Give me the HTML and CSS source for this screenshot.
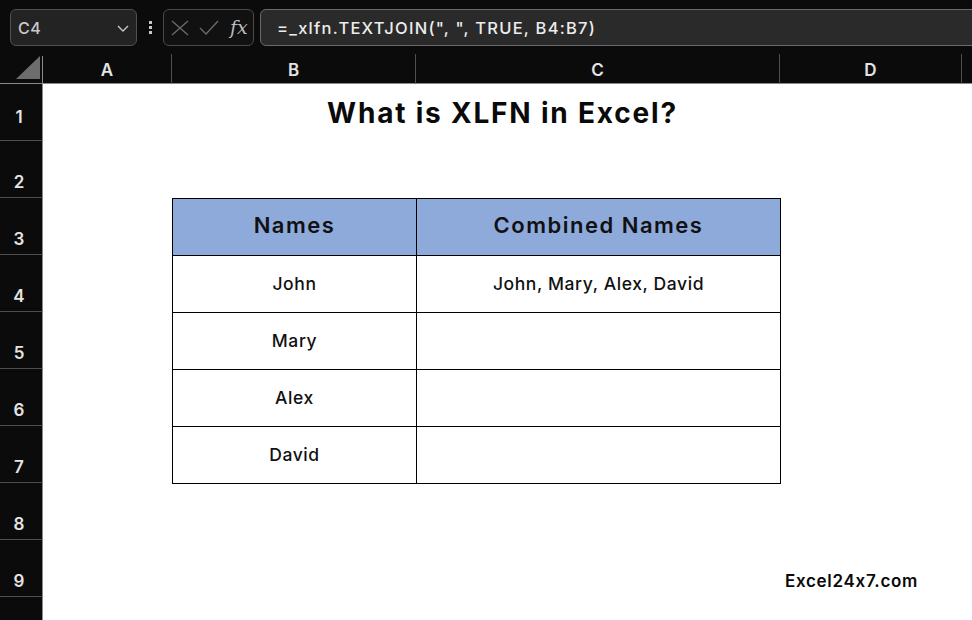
FILE: index.html
```html
<!DOCTYPE html>
<html>
<head>
<meta charset="utf-8">
<link rel="stylesheet" href="styles.css">
</head>
<body>
<div class="app">
  <div class="topbar">
    <div class="namebox">
      <span class="ref">C4</span>
      <svg class="chev" width="12" height="7" viewBox="0 0 12 7"><path d="M1 1 L6 6 L11 1" fill="none" stroke="#c8c8c8" stroke-width="1.4"/></svg>
    </div>
    <div class="dots"><i></i><i></i><i></i></div>
    <div class="fxbox">
      <svg width="18" height="16" viewBox="0 0 18 16"><path d="M1 1 L17 15 M17 1 L1 15" stroke="#6a6a6a" stroke-width="1.4" fill="none"/></svg>
      <svg width="20" height="16" viewBox="0 0 20 16"><path d="M1 8 L7 14 L19 1" stroke="#6a6a6a" stroke-width="1.4" fill="none"/></svg>
      <span class="fx">fx</span>
    </div>
    <div class="formula">=_xlfn.TEXTJOIN(", ", TRUE, B4:B7)</div>
  </div>
  <div class="sheet">
    <div class="corner"><div class="tri"></div></div>
    <div class="colh">A</div>
    <div class="colh">B</div>
    <div class="colh">C</div>
    <div class="colh">D</div>
    <div class="colh last"></div>

    <div class="rowh r1">1</div>
    <div class="title">What is XLFN in Excel?</div>
    <div class="rowh">2</div>
    <div class="blank"></div>
    <div class="rowh">3</div>
    <div class="blank sA"></div>
    <div class="cell head">Names</div>
    <div class="cell head">Combined Names</div>
    <div class="blank sD"></div>
    <div class="rowh">4</div>
    <div class="blank sA"></div>
    <div class="cell">John</div>
    <div class="cell">John, Mary, Alex, David</div>
    <div class="blank sD"></div>
    <div class="rowh">5</div>
    <div class="blank sA"></div>
    <div class="cell">Mary</div>
    <div class="cell"></div>
    <div class="blank sD"></div>
    <div class="rowh">6</div>
    <div class="blank sA"></div>
    <div class="cell">Alex</div>
    <div class="cell"></div>
    <div class="blank sD"></div>
    <div class="rowh">7</div>
    <div class="blank sA"></div>
    <div class="cell">David</div>
    <div class="cell"></div>
    <div class="blank sD"></div>
    <div class="rowh">8</div>
    <div class="blank"></div>
    <div class="rowh">9</div>
    <div class="blank sABC"></div>
    <div class="brand">Excel24x7.com</div>
    <div class="rowh"></div>
    <div class="blank"></div>
  </div>
</div>
</body>
</html>
```
FILE: styles.css
```css
* { box-sizing: border-box; }
html, body { margin: 0; padding: 0; }
body {
  background: #0b0b0b;
  font-family: Inter, "Noto Sans", sans-serif;
  font-feature-settings: "calt" 0;
  width: 972px;
  height: 620px;
  overflow: hidden;
}
.app { width: 972px; height: 620px; overflow: hidden; }
.topbar {
  height: 54px;
  display: flex;
  align-items: flex-start;
  padding-top: 9px;
  padding-left: 10px;
}
.topbar > * { flex-shrink: 0; }
.namebox {
  width: 127px;
  height: 37px;
  background: #232323;
  border: 1px solid #505050;
  border-radius: 6px;
  display: flex;
  align-items: center;
  justify-content: space-between;
  padding: 0 7px 0 7px;
}
.ref { color: #c9c9c9; font-size: 16px; font-weight: 500; letter-spacing: 0.5px; }
.chev { margin-top: 2px; }
.dots {
  width: 26px;
  height: 37px;
  display: flex;
  flex-direction: column;
  align-items: center;
  justify-content: center;
  gap: 2px;
}
.dots i { display: block; width: 3px; height: 3px; background: #c8c8c8; }
.fxbox {
  width: 91px;
  height: 37px;
  border: 1px solid #4a4a4a;
  background: #111;
  border-radius: 6px;
  display: flex;
  align-items: center;
  padding-left: 7px;
  gap: 10px;
}
.fx {
  font-family: "DejaVu Serif", "Liberation Serif", serif;
  font-style: italic;
  color: #bdbdbd;
  font-size: 19px;
  margin-left: 1px;
  margin-top: -2px;
}
.formula {
  margin-left: 6px;
  width: 760px;
  height: 37px;
  background: #2a2a2a;
  border: 1px solid #6a6a6a;
  border-radius: 6px;
  color: #ededed;
  font-size: 16.5px;
  font-weight: 500;
  letter-spacing: 1.25px;
  display: flex;
  align-items: center;
  padding-left: 16px;
}
.sheet {
  display: grid;
  grid-template-columns: 43px 129px 244px 364px 182px 10px;
  grid-template-rows: 30px repeat(10, 57px);
}
.corner {
  border-bottom: 1px solid #8a8a8a;
  border-right: 1px solid #8a8a8a;
  position: relative;
  margin-top: 2px;
}
.tri {
  position: absolute;
  left: 16px;
  bottom: 4px;
  width: 24px;
  height: 23px;
  background: #6d6d6d;
  clip-path: polygon(100% 0, 100% 100%, 0 100%);
}
.colh {
  color: #e4e4e4;
  font-size: 17px;
  font-weight: 600;
  display: flex;
  align-items: center;
  justify-content: center;
  border-bottom: 1px solid #8a8a8a;
  border-right: 1px solid #4e4e4e;
  padding-top: 2px;
}
.colh.last { border-right: 0; }
.rowh {
  color: #e4e4e4;
  font-size: 17px;
  font-weight: 600;
  border-right: 1px solid #8a8a8a;
  border-bottom: 1px solid #4e4e4e;
  display: flex;
  align-items: flex-end;
  justify-content: center;
  padding-bottom: 5px;
  padding-right: 4px;
}
.rowh.r1 { padding-bottom: 13px; }
.title {
  grid-column: 2 / 7;
  background: #fff;
  color: #0a0a0a;
  font-size: 28px;
  font-weight: 700;
  letter-spacing: 1.8px;
  display: flex;
  align-items: center;
  justify-content: center;
  padding-right: 10px;
}
.blank { grid-column: 2 / 7; background: #fff; }
.blank.sA { grid-column: 2 / 3; }
.blank.sD { grid-column: 5 / 7; }
.blank.sABC { grid-column: 2 / 5; }
.cell {
  background: #fff;
  color: #111;
  font-size: 17.5px;
  font-weight: 500;
  letter-spacing: 0.6px;
  display: flex;
  align-items: center;
  justify-content: center;
  border: 1px solid #000;
  margin: 0 -1px -1px 0;
  position: relative;
  z-index: 1;
  padding-bottom: 1px;
}
.cell.head {
  background: #8eaadb;
  font-size: 22px;
  font-weight: 600;
  letter-spacing: 1.5px;
  padding-bottom: 4px;
}
.brand {
  grid-column: 5 / 7;
  background: #fff;
  color: #0a0a0a;
  font-size: 17px;
  font-weight: 600;
  letter-spacing: 0.7px;
  display: flex;
  align-items: center;
  padding-left: 5px;
  padding-top: 25px;
}
```
